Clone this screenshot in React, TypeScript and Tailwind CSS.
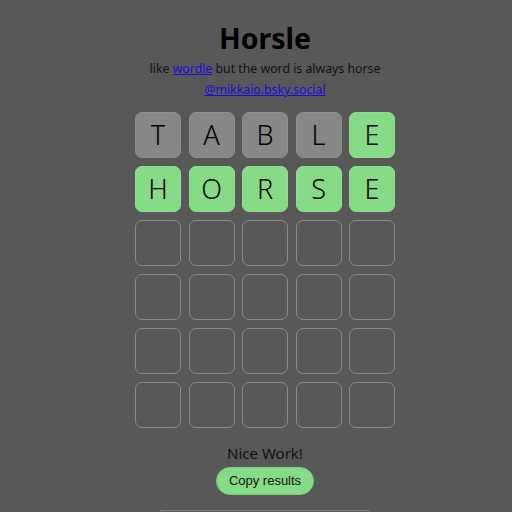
import React from 'react';

type Tile = { letter: string; state: 'absent' | 'correct' | 'empty' };

const guesses = ['TABLE', 'HORSE'];
const answer = 'HORSE';

const buildRows = (): Tile[][] => {
  const rows: Tile[][] = [];
  for (let r = 0; r < 6; r++) {
    const guess = guesses[r];
    const row: Tile[] = [];
    for (let c = 0; c < 5; c++) {
      if (!guess) {
        row.push({ letter: '', state: 'empty' });
      } else {
        const ch = guess[c];
        row.push({ letter: ch, state: ch === answer[c] ? 'correct' : 'absent' });
      }
    }
    rows.push(row);
  }
  return rows;
};

const tileClass: Record<Tile['state'], string> = {
  absent: 'bg-[#878787] border-[#8f8f8f]',
  correct: 'bg-[#86dc86] border-[#8ee08e]',
  empty: 'bg-transparent border-[#8a8a8a]',
};

export default function App() {
  const rows = buildRows();

  return (
    <div
      className="h-screen w-full bg-[#585858] text-[#111] flex flex-col items-center pl-[18px] overflow-hidden"
      style={{ fontFamily: '"Noto Sans", "Open Sans", sans-serif' }}
    >
      {/* Header */}
      <h1 className="shrink-0 mt-[18px] text-[28.5px] leading-[40px] font-bold text-black">Horsle</h1>
      <p className="shrink-0 mt-[1px] text-[12.3px] leading-[20px]">
        like{' '}
        <a href="#" className="text-[#1a0dd8] underline">
          wordle
        </a>{' '}
        but the word is always horse
      </p>
      <a href="#" className="shrink-0 mt-[1px] text-[12.3px] leading-[20px] text-[#1a0dd8] underline">
        @mikkaio.bsky.social
      </a>

      {/* Board */}
      <div className="shrink-0 mt-[12px] grid grid-cols-5 gap-x-[7.5px] gap-y-[8px]">
        {rows.flat().map((tile, i) => (
          <div
            key={i}
            className={`w-[46px] h-[46px] rounded-[7px] border flex items-center justify-center text-[27px] font-light text-black ${tileClass[tile.state]}`}
          >
            {tile.letter}
          </div>
        ))}
      </div>

      {/* Result */}
      <p className="shrink-0 mt-[14px] text-[15px] leading-[22px] text-[#111]">Nice Work!</p>
      <button
        className="shrink-0 mt-[3px] h-[28px] px-[12px] rounded-full bg-[#86dc86] border border-[#7acc7a] text-[13px] text-[#111]"
        style={{ fontFamily: '"Liberation Sans", Arial, sans-serif' }}
      >
        Copy results
      </button>
      <div className="shrink-0 mt-[15px] w-[210px] h-[4px] border-t border-l border-[#7a7a7a] bg-[#5c5c5c]" />
    </div>
  );
}
